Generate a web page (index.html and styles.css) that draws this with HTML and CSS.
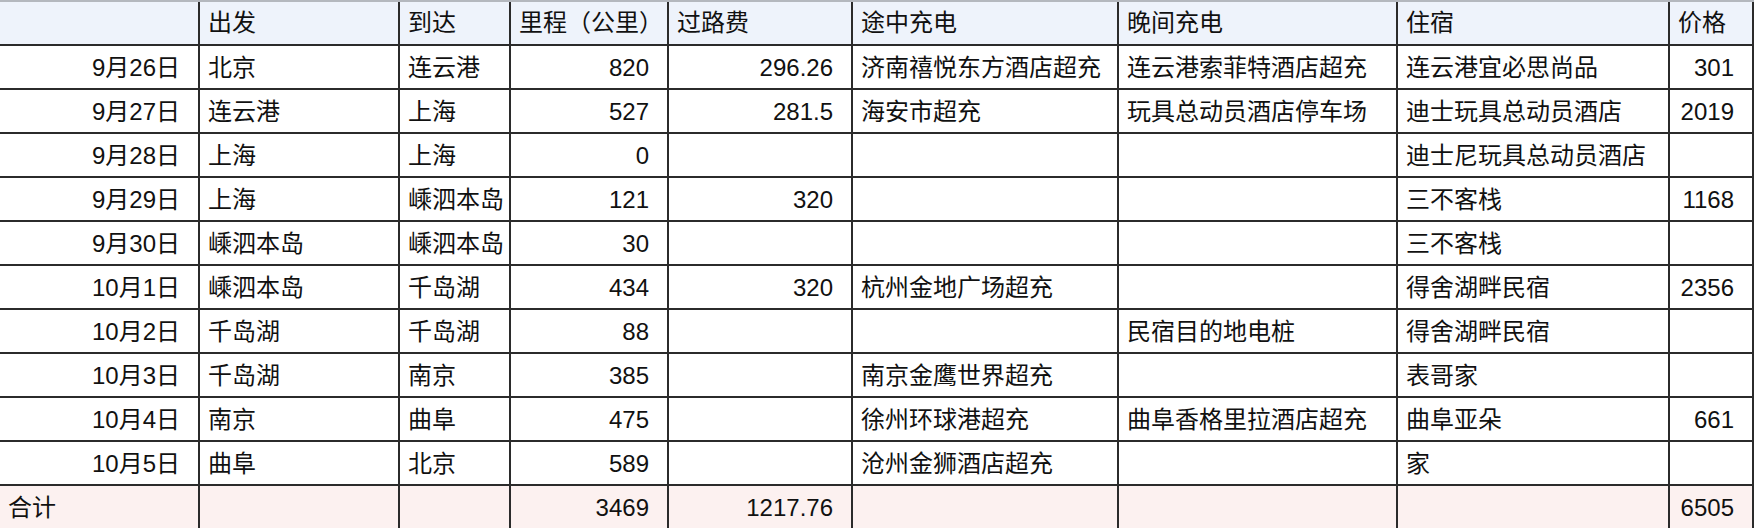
FILE: index.html
```html
<!DOCTYPE html>
<html lang="zh">
<head>
<meta charset="utf-8">
<title>行程表</title>
<link rel="stylesheet" href="styles.css">
</head>
<body>
<div class="sheet">
  <div class="grid">
    <div class="c h"></div><div class="c h">出发</div><div class="c h">到达</div><div class="c h">里程（公里）</div><div class="c h">过路费</div><div class="c h">途中充电</div><div class="c h">晚间充电</div><div class="c h">住宿</div><div class="c h">价格</div>

    <div class="c r">9月26日</div><div class="c">北京</div><div class="c">连云港</div><div class="c r">820</div><div class="c r">296.26</div><div class="c">济南禧悦东方酒店超充</div><div class="c">连云港索菲特酒店超充</div><div class="c">连云港宜必思尚品</div><div class="c r">301</div>

    <div class="c r">9月27日</div><div class="c">连云港</div><div class="c">上海</div><div class="c r">527</div><div class="c r">281.5</div><div class="c">海安市超充</div><div class="c">玩具总动员酒店停车场</div><div class="c">迪士玩具总动员酒店</div><div class="c r">2019</div>

    <div class="c r">9月28日</div><div class="c">上海</div><div class="c">上海</div><div class="c r">0</div><div class="c r"></div><div class="c"></div><div class="c"></div><div class="c">迪士尼玩具总动员酒店</div><div class="c r"></div>

    <div class="c r">9月29日</div><div class="c">上海</div><div class="c">嵊泗本岛</div><div class="c r">121</div><div class="c r">320</div><div class="c"></div><div class="c"></div><div class="c">三不客栈</div><div class="c r">1168</div>

    <div class="c r">9月30日</div><div class="c">嵊泗本岛</div><div class="c">嵊泗本岛</div><div class="c r">30</div><div class="c r"></div><div class="c"></div><div class="c"></div><div class="c">三不客栈</div><div class="c r"></div>

    <div class="c r">10月1日</div><div class="c">嵊泗本岛</div><div class="c">千岛湖</div><div class="c r">434</div><div class="c r">320</div><div class="c">杭州金地广场超充</div><div class="c"></div><div class="c">得舍湖畔民宿</div><div class="c r">2356</div>

    <div class="c r">10月2日</div><div class="c">千岛湖</div><div class="c">千岛湖</div><div class="c r">88</div><div class="c r"></div><div class="c"></div><div class="c">民宿目的地电桩</div><div class="c">得舍湖畔民宿</div><div class="c r"></div>

    <div class="c r">10月3日</div><div class="c">千岛湖</div><div class="c">南京</div><div class="c r">385</div><div class="c r"></div><div class="c">南京金鹰世界超充</div><div class="c"></div><div class="c">表哥家</div><div class="c r"></div>

    <div class="c r">10月4日</div><div class="c">南京</div><div class="c">曲阜</div><div class="c r">475</div><div class="c r"></div><div class="c">徐州环球港超充</div><div class="c">曲阜香格里拉酒店超充</div><div class="c">曲阜亚朵</div><div class="c r">661</div>

    <div class="c r">10月5日</div><div class="c">曲阜</div><div class="c">北京</div><div class="c r">589</div><div class="c r"></div><div class="c">沧州金狮酒店超充</div><div class="c"></div><div class="c">家</div><div class="c r"></div>

    <div class="c f">合计</div><div class="c f"></div><div class="c f"></div><div class="c f r">3469</div><div class="c f r">1217.76</div><div class="c f"></div><div class="c f"></div><div class="c f"></div><div class="c f r">6505</div>
  </div>
</div>
</body>
</html>
```

FILE: styles.css
```css
html, body {
  margin: 0;
  padding: 0;
  background: #ffffff;
}

.sheet {
  width: 1754px;
  height: 528px;
  overflow: hidden;
  border-top: 2px solid #b4b8be;
  box-sizing: border-box;
}

.grid {
  display: grid;
  grid-template-columns: 198px 198px 109px 156px 182px 264px 277px 270px 82px;
  grid-auto-rows: 42px;
  column-gap: 2px;
  row-gap: 2px;
  background: #2b2b2b;
  width: 1752px;
  padding-right: 2px;
}

.c {
  background: #ffffff;
  font-family: "Liberation Sans", "Noto Sans CJK SC", sans-serif;
  font-size: 24px;
  color: #111111;
  padding: 1px 8px 0;
  display: flex;
  align-items: center;
  white-space: nowrap;
  overflow: hidden;
  line-height: 1;
}

.h {
  background: #eef3fb;
  padding-top: 0;
}

.f {
  background: #fcf1f0;
}

.r {
  justify-content: flex-end;
  padding-right: 18px;
}
```
